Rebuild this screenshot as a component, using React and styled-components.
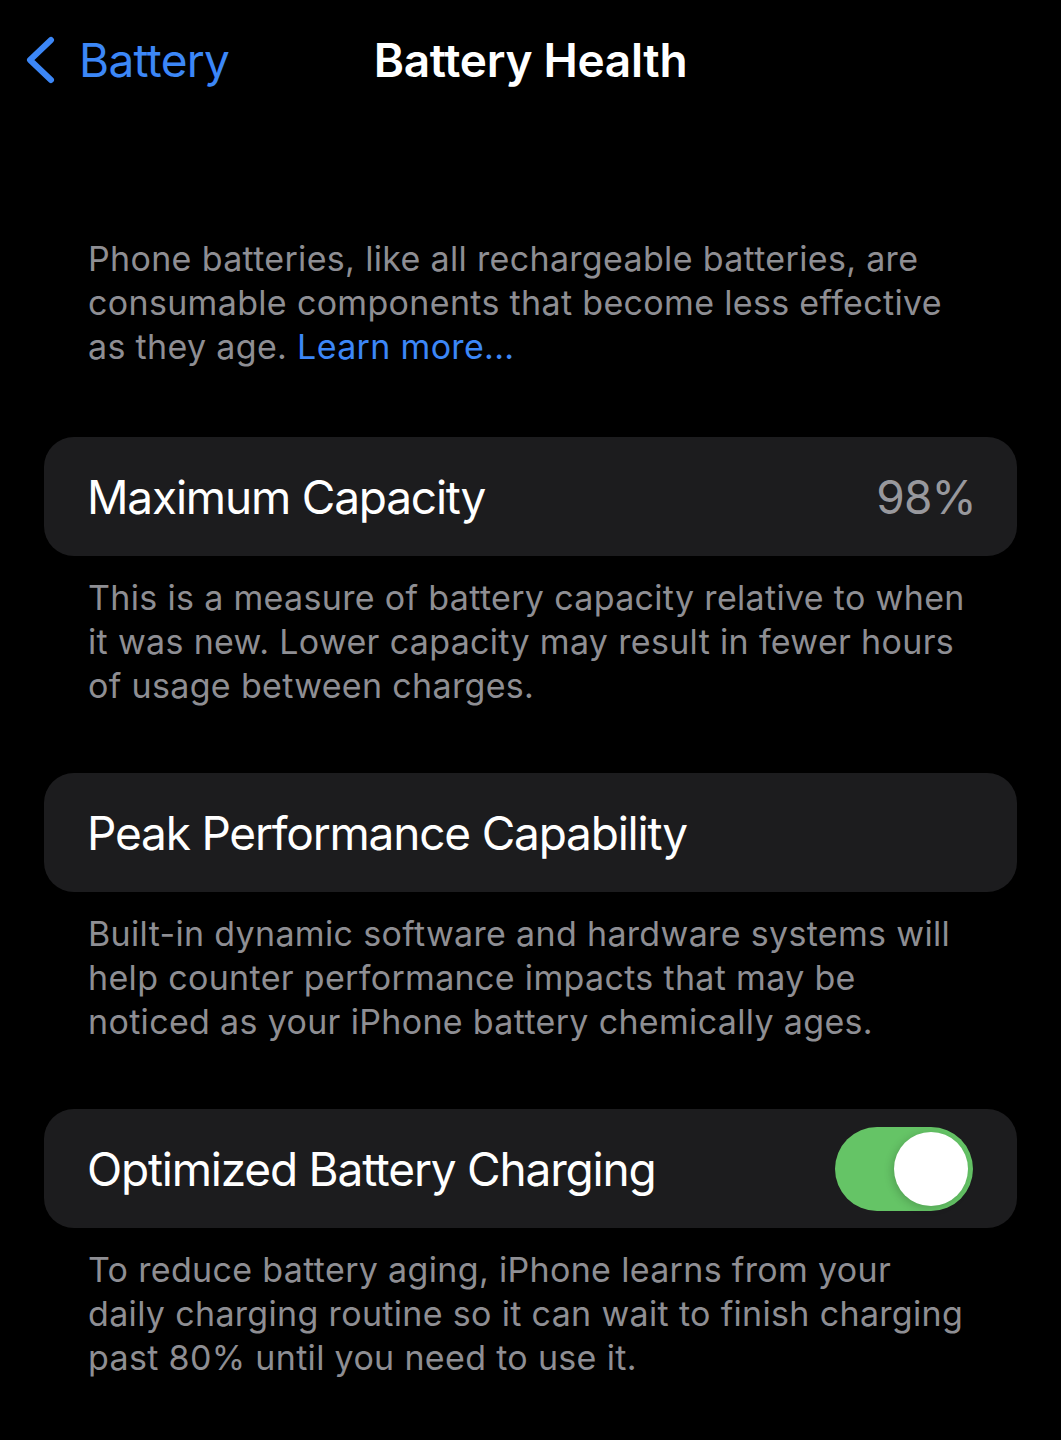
import React from 'react'
import styled, { createGlobalStyle } from 'styled-components'

const GlobalStyle = createGlobalStyle`
  html, body {
    margin: 0;
    padding: 0;
    background: #000;
  }
  body {
    font-family: Inter, "Noto Sans", "Liberation Sans", sans-serif;
    -webkit-font-smoothing: antialiased;
  }
`

const Screen = styled.div`
  width: 1061px;
  min-height: 1440px;
  background: #000;
  color: #fff;
`

const NavBar = styled.header`
  position: relative;
  height: 120px;
  display: flex;
  align-items: center;
  justify-content: center;
`

const BackButton = styled.a`
  position: absolute;
  left: 24px;
  top: 36px;
  display: flex;
  align-items: center;
  gap: 23px;
  color: #3c87f7;
  font-size: 46px;
  line-height: 48px;
  letter-spacing: -0.7px;
  text-decoration: none;
`

const Title = styled.h1`
  margin: 0;
  font-size: 46px;
  font-weight: 600;
  letter-spacing: -0.3px;
`

const Content = styled.main`
  padding: 117px 44px 0;
`

const Note = styled.p`
  margin: ${p => (p.$intro ? '0 0 68px' : '20px 0 65px')};
  padding: 0 44px;
  color: #8e8e93;
  font-size: 34px;
  line-height: 44px;
  letter-spacing: 0.33px;
`

const Link = styled.a`
  color: #3c87f7;
  text-decoration: none;
`

const Card = styled.div`
  height: 119px;
  box-sizing: border-box;
  padding: 0 44px 0 43px;
  display: flex;
  align-items: center;
  justify-content: space-between;
  background: #1c1c1e;
  border-radius: 30px;
`

const Label = styled.span`
  font-size: 46px;
  letter-spacing: -1.2px;
  color: #fff;
`

const Value = styled.span`
  margin-right: -3px;
  font-size: 46px;
  letter-spacing: -0.8px;
  color: #98989d;
`

const Track = styled.div`
  width: 138px;
  height: 84px;
  border-radius: 42px;
  background: #65c466;
  display: flex;
  align-items: center;
  justify-content: ${p => (p.$on ? 'flex-end' : 'flex-start')};
  padding: 0 5px;
  box-sizing: border-box;
`

const Knob = styled.div`
  width: 74px;
  height: 74px;
  border-radius: 50%;
  background: #fff;
  box-shadow: -2px 2px 8px rgba(0, 0, 0, 0.18);
`

function Chevron() {
  return (
    <svg width="32" height="48" viewBox="0 0 32 48" fill="none">
      <path
        d="M27 4 L6 24 L27 44"
        stroke="currentColor"
        strokeWidth="6"
        strokeLinecap="round"
        strokeLinejoin="round"
      />
    </svg>
  )
}

function Toggle({ on }) {
  return (
    <Track $on={on}>
      <Knob />
    </Track>
  )
}

export default function App() {
  return (
    <Screen>
      <GlobalStyle />
      <NavBar>
        <BackButton href="#">
          <Chevron />
          Battery
        </BackButton>
        <Title>Battery Health</Title>
      </NavBar>
      <Content>
        <Note $intro>
          Phone batteries, like all rechargeable batteries, are consumable
          components that become less effective as they age.{' '}
          <Link href="#">Learn more...</Link>
        </Note>

        <Card>
          <Label>Maximum Capacity</Label>
          <Value>98%</Value>
        </Card>
        <Note>
          This is a measure of battery capacity relative to when it was new.
          Lower capacity may result in fewer hours of usage between charges.
        </Note>

        <Card>
          <Label>Peak Performance Capability</Label>
        </Card>
        <Note>
          Built-in dynamic software and hardware systems will help counter
          performance impacts that may be noticed as your iPhone battery
          chemically ages.
        </Note>

        <Card>
          <Label>Optimized Battery Charging</Label>
          <Toggle on />
        </Card>
        <Note>
          To reduce battery aging, iPhone learns from your daily charging
          routine so it can wait to finish charging past 80% until you need to
          use it.
        </Note>
      </Content>
    </Screen>
  )
}
